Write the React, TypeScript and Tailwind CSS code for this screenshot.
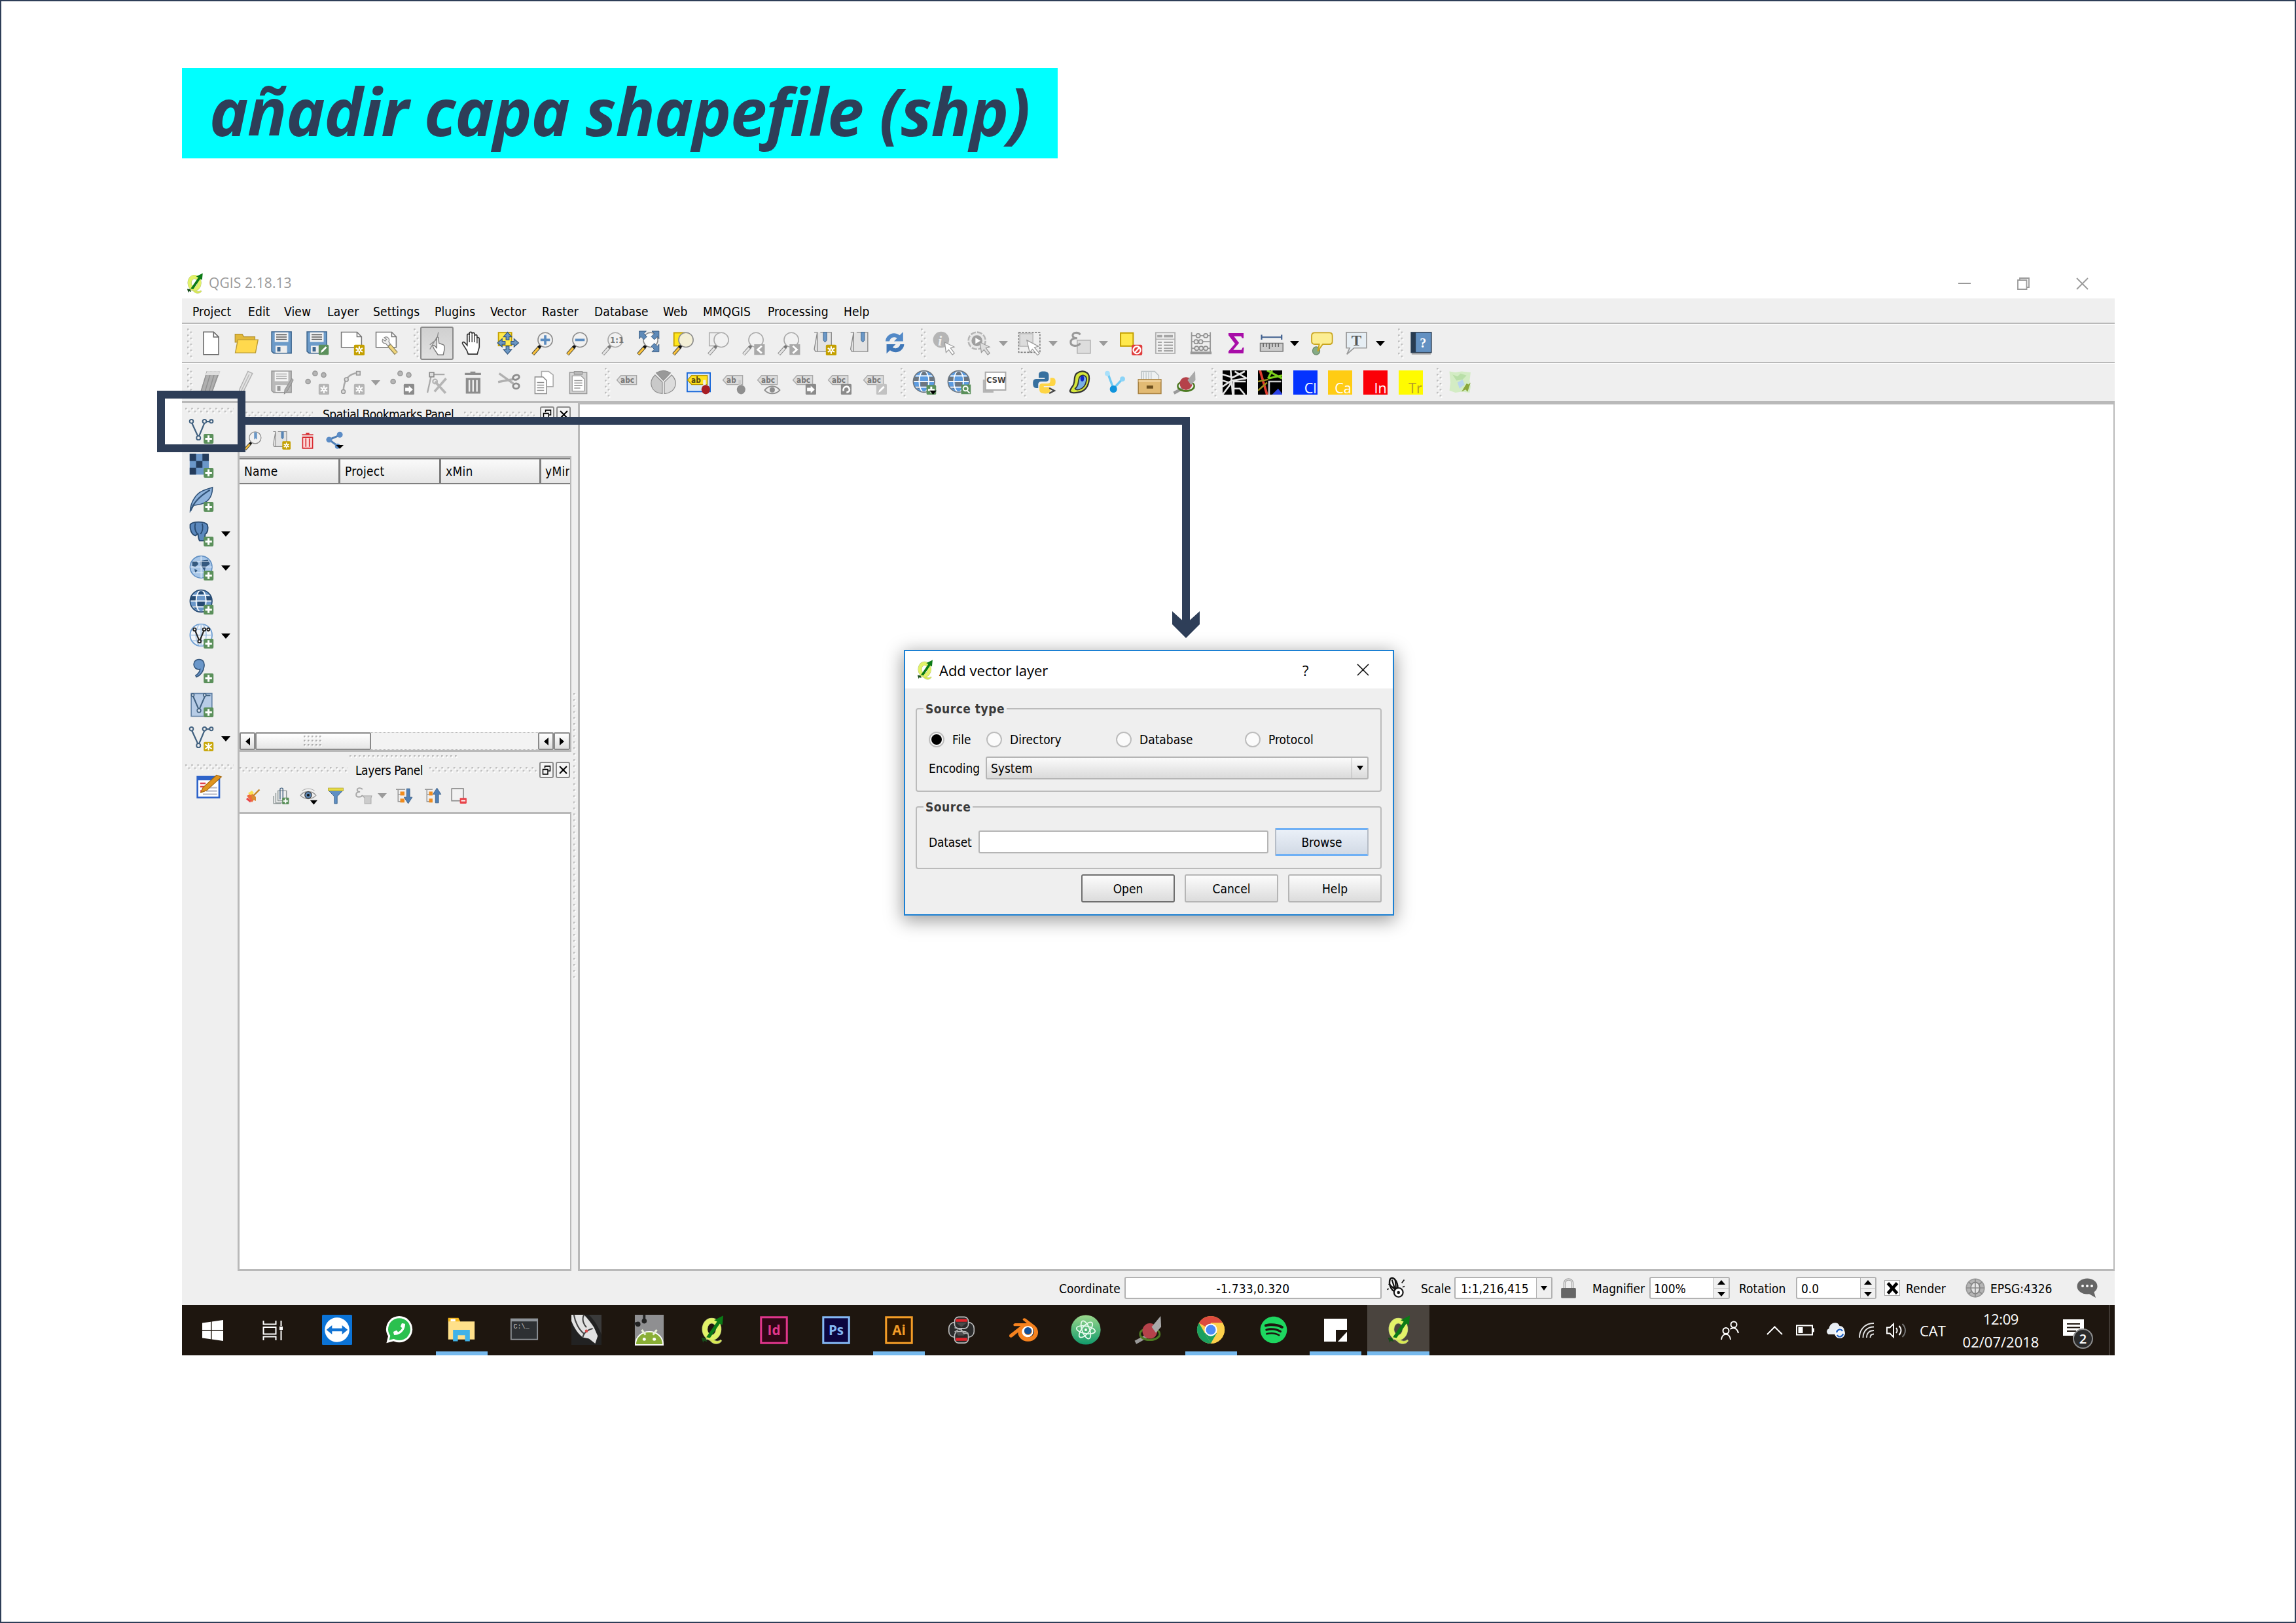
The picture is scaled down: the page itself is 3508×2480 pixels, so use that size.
import React from 'react';
import { FaPhoneAlt, FaSpotify } from 'react-icons/fa';
import { SiBlender } from 'react-icons/si';

type Kids = { children?: React.ReactNode };

/* ---------- shared icon parts ---------- */

function Ic({ children, c = 'size-[37px]' }: Kids & { c?: string }) {
  return (
    <svg viewBox="0 0 24 24" className={`${c} shrink-0 overflow-visible`} fill="none">
      {children}
    </svg>
  );
}

const Plus = () => (
  <g>
    <rect x="14" y="14.500" width="9.500" height="9.500" rx="1.200" fill="#5b905b" />
    <path d="M18.700 16v6.500M15.500 19.300h6.500" stroke="#fff" strokeWidth="1.900" />
  </g>
);
const Star = ({ f = '#c4a000' }: { f?: string }) => (
  <g>
    <rect x="13.5" y="13.5" width="10.5" height="10.5" rx="1.2" fill={f} />
    <path d="M18.75 15v7.5M15.4 16.9l6.7 3.8M22.1 16.9l-6.7 3.8" stroke="#fff" strokeWidth="1.4" />
    <circle cx="18.75" cy="18.75" r="1.2" fill={f} stroke="#fff" strokeWidth="1" />
  </g>
);
const ArrowBadge = () => (
  <g>
    <rect x="13.5" y="13.5" width="10.5" height="10.5" rx="1" fill="#8b8b8b" />
    <path d="M15 17.2h3.6v-2l4 3.7-4 3.7v-2H15z" fill="#fff" />
  </g>
);
const Mag = ({ color = false, fill = '#f1f1f1' }: { color?: boolean; fill?: string }) => (
  <g>
    <path d="M8.6 15.6 2 23" stroke={color ? '#4a4a3a' : '#8d8d8d'} strokeWidth="3.4" />
    <path d="M7.6 16.8 2.2 22.8" stroke={color ? '#fcc23c' : '#e4e4e4'} strokeWidth="2" />
    <path d="m9.8 14.2-2 2.2" stroke={color ? '#111' : '#777'} strokeWidth="2.8" />
    <circle cx="14.3" cy="8.7" r="7.2" fill={fill} stroke={color ? '#8a8a8a' : '#a8a8a8'} strokeWidth="1" />
  </g>
);
const Tag = ({ f = '#dcdcdc', s = '#a9a9a9', t = '#777', text = 'abc' }: { f?: string; s?: string; t?: string; text?: string }) => (
  <g>
    <path d="M1 9.5 5 5h15.5v9H5z" fill={f} stroke={s} strokeWidth=".9" />
    <text x="4.6" y="12.4" fontSize="7.6" fontWeight="700" fill={t} fontFamily="DejaVu Sans Condensed, sans-serif">{text}</text>
  </g>
);
const Nodes = ({ c = '#3f5f7e' }: { c?: string }) => (
  <g stroke={c} strokeWidth="1.2">
    <path d="M2.6 4 9 18 14.8 4M16.6 2.6h3.5" strokeWidth="1.4" />
    <circle cx="2.2" cy="2.4" r="1.8" fill="#efefef" />
    <circle cx="14.8" cy="2.4" r="1.8" fill="#efefef" />
    <circle cx="21.4" cy="2.4" r="1.6" fill="#efefef" />
    <circle cx="9" cy="18.4" r="1.9" fill="#efefef" />
  </g>
);
const Floppy = ({ f = '#6c9bc9', s = '#3e668e', l = '#555' }: { f?: string; s?: string; l?: string }) => (
  <g>
    <path d="M2 .6h19.500v21.2H4L2 20z" fill={f} stroke={s} strokeWidth="1" />
    <rect x="5" y="1.2" width="13.5" height="9.500" fill="#f4f4f4" />
    <path d="M6.500 3.5h10.4M6.500 5.8h10.4M6.500 8.100h10.4" stroke={l} strokeWidth="1" />
    <rect x="5.800" y="14.4" width="11.500" height="7" fill="#eee" />
    <rect x="7.500" y="15.6" width="3.200" height="4.6" fill={s} />
  </g>
);
const Globe = ({ c, land }: { c: string; land: string }) => (
  <g>
    <circle cx="11.5" cy="11" r="10.6" fill={c} />
    <path d="M2 6.500h5v4.2H1M16 6.500h5.3v4.2H16zM8 11.5h7v4.600H8zM9 1.500h5v3H9zM3 16h4v3z" fill={land} />
    <path d="M1 11h21M3 5.4h17M3 16.6h17" stroke="#fff" strokeWidth="1.100" />
    <ellipse cx="11.5" cy="11" rx="4.800" ry="10.5" stroke="#fff" strokeWidth="1.100" />
    <circle cx="11.5" cy="11" r="10.6" stroke={land} strokeWidth="1.100" />
  </g>
);
const QLogo = () => (
  <g>
    <path d="M5.500 18.800c2.600-.8 4.800-.4 6.500 1.500 1.600 1.800 4.400 2.200 6.400.3l.8 1c-1.600 3-6.200 3.400-8.700 1.200-1.500-1.500-3-2.600-5-2.600z" fill="#d9ea4e" stroke="#b9c48a" strokeWidth=".5" />
    <ellipse cx="10.500" cy="11.400" rx="6" ry="7.400" stroke="#aebb77" strokeWidth="5" />
    <ellipse cx="10.500" cy="11.400" rx="6" ry="7.400" stroke="#e2f268" strokeWidth="4.300" />
    <path d="m5.800 18.400 9.400-13.600-2.600-1.200L20.600-.4l-.8 8.200-2.200-1.200L9 19.200z" fill="#0b7a16" />
    <path d="m1.500 18.800 3.800.4 1.200 3.200-2.600-.9-.9 1.800z" fill="#174d1b" />
  </g>
);

/* ---------- chrome helpers ---------- */

const VDots = ({ c = 'h-[46px] w-[9px]' }: { c?: string }) => (
  <svg className={c}><rect width="100%" height="100%" fill="url(#zig)" /></svg>
);
const HDots = ({ c = '' }: { c?: string }) => (
  <svg className={`h-[9px] ${c}`}><rect width="100%" height="100%" fill="url(#zig)" /></svg>
);
const B = ({ children }: Kids) => <div className="flex w-[53.8px] shrink-0 items-center justify-center">{children}</div>;
const Handle = () => <div className="flex w-[22px] shrink-0 items-center justify-end"><VDots /></div>;
const Drop = ({ g = false }: { g?: boolean }) => (
  <div className="flex w-[23px] shrink-0 items-center pl-[2px]">
    <svg viewBox="0 0 14 8" className="h-[8px] w-[14px]"><path d="M0 0h14L7 8z" fill={g ? '#9b9b9b' : '#000'} /></svg>
  </div>
);

const menus: [string, string][] = [
  ['Project', 'w-[85px]'], ['Edit', 'w-[55px]'], ['View', 'w-[66px]'], ['Layer', 'w-[70px]'], ['Settings', 'w-[94px]'],
  ['Plugins', 'w-[85px]'], ['Vector', 'w-[79px]'], ['Raster', 'w-[80px]'], ['Database', 'w-[105px]'], ['Web', 'w-[61px]'],
  ['MMQGIS', 'w-[99px]'], ['Processing', 'w-[116px]'], ['Help', 'w-[60px]'],
];

function ToolbarOne() {
  return (
    <div className="flex h-[60px] items-stretch border-t-[1px] border-b-[2px] border-t-white border-b-[#b9b9b9]">
      <div className="flex w-[18px] items-center justify-end pr-[1px]"><VDots /></div>
      <B><Ic><path d="M4.500.8h10l5 5v17.400h-15z" fill="#fff" stroke="#666" strokeWidth="1" /><path d="M14.500.8v5h5" stroke="#666" /></Ic></B>
      <B><Ic><path d="M.8 3h7l1.6 2.6h11V11H.8z" fill="#e2b93a" stroke="#b5922c" strokeWidth=".8" /><path d="M3.5 8.500h20L21 21.500H1z" fill="#ffd94d" stroke="#b99a34" strokeWidth=".9" /></Ic></B>
      <B><Ic><Floppy /></Ic></B>
      <B><Ic><Floppy /><rect x="13.5" y="13.5" width="10" height="10" rx="1.2" fill="#5b905b" /><path d="m15.5 21.5 1-2.5 4-4 1.2 1.4-4 4z" fill="#fff" /></Ic></B>
      <B><Ic><path d="M1 1h15.500l4.500 4.500V16H1z" fill="#fff" stroke="#777" /><path d="M16.500 1v4.500H21" stroke="#777" /><Star /></Ic></B>
      <B><Ic><path d="M1 1h15.500l4.500 4.500V16H1z" fill="#fff" stroke="#777" /><path d="M16.500 1v4.500H21" stroke="#777" /><path d="m14 14 7 8.2" stroke="#8d8358" strokeWidth="4.2" /><path d="m14.5 14.5 6.3 7.2" stroke="#f0d57c" strokeWidth="2.6" /><path d="M9 6.500c3-2 6 .8 4.6 4l1.6 2.400-2.600 1.800-2-2.400c-3 .2-4-2.300-3-4.300l2.400 1.800 1.400-1.600z" fill="#eee" stroke="#888" strokeWidth=".8" /></Ic></B>
      <Handle />
      <B>
        <div className="flex h-[51px] w-[51px] items-center justify-center rounded-[3px] border-2 border-[#8b8b8b] bg-linear-to-b from-[#d0d0d0] to-[#e0e0e0]">
          <Ic><path d="M13.500 1 12 8 5 13.500M12 6 5 18" stroke="#8d8d8d" strokeWidth=".9" /><path d="M12 6.500c.4-.8 1.400-.8 1.500 0l.6 5.500 4 1.400c1.800.8 1.800 2.400 1.400 4.600l-1.200 5.500h-5.200L9.400 18l-1.600-3.400c.8-.8 1.600-.4 2 0l2.100 2z" fill="#fff" stroke="#777" strokeWidth=".9" /></Ic>
        </div>
      </B>
      <B><Ic><path d="M8 22.800 6.600 19 2.400 12.400c-.5-1.600 1-2.200 2.200-1L7 14V4c0-1.600 2.200-1.600 2.200 0V2.400C9.200.4 11.800.4 11.800 2.400v.4c0-1.800 2.600-1.600 2.600.2v1.600c.2-1.400 2.400-1.400 2.400.4v2c.4-1.200 2.200-1 2.200.6v8.200L17 22.800z" fill="#fff" stroke="#333" strokeWidth="1.100" /><path d="M9.200 4v7M11.800 3v8M14.400 4v7M16.800 6v6" stroke="#333" strokeWidth=".9" /></Ic></B>
      <B><Ic><rect x="3" y="1.400" width="13" height="13" fill="#ffe94d" stroke="#c4a000" strokeWidth="1.200" /><path d="m12 1 4 4.600h-2.500v3h-3v-3H8zM12 22.800l-4-4.600h2.500v-3.400h3v3.400H16zM2 11.600l4.600-4v2.500h3v3h-3v2.500zM23 11.600l-4.600-4v2.500h-3v3h3v2.500z" fill="#6b97c4" stroke="#34577e" strokeWidth=".8" /></Ic></B>
      <B><Ic><Mag color /><path d="M14.300 4v9.400M9.600 8.700H19" stroke="#5b8cc0" strokeWidth="2.400" /></Ic></B>
      <B><Ic><Mag color /><path d="M9.600 8.700H19" stroke="#5b8cc0" strokeWidth="2.400" /></Ic></B>
      <B><Ic><Mag /><text x="9.100" y="11.800" fontSize="8.500" fontWeight="700" fill="#777" fontFamily="DejaVu Sans Condensed, sans-serif">1:1</text></Ic></B>
      <B><Ic><Mag color fill="#fafafa" /><path d="M3 0h7L7.600 2.400l3 3-3 3-3-3L3 7.600zM22.600 0h-7L18 2.400l-3 3 3 3 3-3 1.600 2.200zM22.600 20.500h-7L18 18l-3-3 3-3 3 3 1.600-2z" fill="#5f8ab8" stroke="#34577e" strokeWidth=".6" /></Ic></B>
      <B><Ic><rect x="2.400" y="1.600" width="10" height="13" fill="#ffe61c" stroke="#c4a000" strokeWidth="1.200" /><Mag color fill="#f3efd6" /></Ic></B>
      <B><Ic><rect x="2.400" y="1.600" width="10" height="13" fill="#eee" stroke="#aaa" /><Mag /></Ic></B>
      <B><Ic><Mag /><rect x="12.500" y="13" width="10.500" height="10.500" fill="#a9a9a9" /><path d="m20 14.800-4 3.500 4 3.500" stroke="#fff" strokeWidth="1.800" /></Ic></B>
      <B><Ic><Mag /><rect x="12.500" y="13" width="10.500" height="10.500" fill="#a9a9a9" /><path d="m15.800 14.800 4 3.500-4 3.500" stroke="#fff" strokeWidth="1.800" /></Ic></B>
      <B><Ic><path d="M2 1.200h3v19h14V1.200H8M5 1.200v19H3.200L2 18z" fill="#e3e3e3" stroke="#8b8b8b" strokeWidth=".9" /><path d="M11 1h3.400v8l-1.700 2-1.700-2z" fill="#6a97c6" stroke="#3e668e" strokeWidth=".6" /><Star /></Ic></B>
      <B><Ic><path d="M3 1.200h3v19h14V1.200H9M6 1.200v19H4.200L3 18z" fill="#e3e3e3" stroke="#8b8b8b" strokeWidth=".9" /><path d="M13.400 1h3.400v8l-1.700 2-1.700-2z" fill="#6a97c6" stroke="#3e668e" strokeWidth=".6" /></Ic></B>
      <B><Ic><path d="M2.600 10C2.800 4 10-.8 16.600 4L20 .8V10h-9l3-3C10.600 5 7.600 6.200 6.400 10z" fill="#5289c7" /><path d="M21 13c-.2 6-7.400 10.800-14 6l-3.400 3.200V13h9l-3 3c3.400 2 6.400.8 7.600-3z" fill="#3f77b8" /></Ic></B>
      <Handle />
      <B><Ic><circle cx="9" cy="8.500" r="8" fill="#b5b5b5" /><text x="6" y="14" fontSize="14" fontWeight="700" fontStyle="italic" fill="#eee" fontFamily="Liberation Serif, serif">i</text><path d="m12.500 11 9.500 4.600-3.600 1.200 3.800 5-2 1.600-3.700-5-2.600 2.800z" fill="#fff" stroke="#999" strokeWidth=".8" /></Ic></B>
      <B><Ic><circle cx="9.500" cy="9.500" r="7.400" stroke="#b5b5b5" strokeWidth="3.800" strokeDasharray="4.600 1.200" /><circle cx="9.500" cy="9.500" r="7.600" fill="#e8e8e8" /><circle cx="9.500" cy="9.500" r="5.400" fill="#a0a0a0" /><path d="m8 6.500 5 3-5 3z" fill="#fff" /><path d="m12.500 11 9.500 4.600-3.600 1.200 3.800 5-2 1.600-3.700-5-2.600 2.800z" fill="#ddd" stroke="#999" strokeWidth=".8" /></Ic></B>
      <Drop g />
      <B><Ic><path d="M1 1.500h21v19.500H1z" stroke="#777" strokeDasharray="2 1.200" /><rect x="2" y="2.500" width="13" height="12.500" fill="#dcdcdc" stroke="#bbb" /><path d="m9 9 11.500 6-4 1.200 5 6-2 1.600-4.900-6-2.800 3.200z" fill="#fff" stroke="#999" strokeWidth=".8" /></Ic></B>
      <Drop g />
      <B><Ic><rect x="9" y="9" width="13" height="13" fill="#ddd" stroke="#b2b2b2" /><path d="M12 3.500C10 .5 4 1 4.500 4.500 4.800 6.500 6.500 7 9 7c-3.500 0-6.500 1-6.500 4C2.500 15.500 10 15.500 12 12" stroke="#999" strokeWidth="2" /></Ic></B>
      <Drop g />
      <B><Ic><rect x="2" y="1.800" width="12.500" height="13" fill="#ffe94d" stroke="#c4a000" strokeWidth="1.300" /><rect x="13" y="13.500" width="10.500" height="10.500" rx="1.500" fill="#e03c3c" /><circle cx="18.200" cy="18.700" r="3.600" stroke="#fff" strokeWidth="1.500" /><path d="m16 21.400 4.600-5.200" stroke="#fff" strokeWidth="1.500" /></Ic></B>
      <B><Ic><rect x="2.500" y="1.500" width="19" height="20.500" fill="#f2f2f2" stroke="#b0b0b0" strokeWidth="1.200" /><path d="M4 5h5M10.500 5h9" stroke="#a5a5a5" strokeWidth="2.400" /><path d="M2 8h20" stroke="#b0b0b0" /><path d="M4.500 11h4M10.500 11h9M4.500 14h4M10.500 14h9M4.500 17h4M10.500 17h9M4.500 19.500h4M10.500 19.500h9" stroke="#a5a5a5" strokeWidth="1.400" /></Ic></B>
      <B><Ic><path d="M3 1v21M21.500 1v21M3 4.500h18.500M3 10.500h18.500M3 17h18.500" stroke="#999" strokeWidth="1.200" /><path d="M1.800 21.600h21" stroke="#999" strokeWidth="2.600" /><g fill="#e5e5e5" stroke="#8f8f8f" strokeWidth="1.100"><circle cx="9.500" cy="4.500" r="2" /><circle cx="17" cy="4.500" r="2" /><circle cx="7.500" cy="10.500" r="2" /><circle cx="12" cy="10.500" r="2" /><circle cx="8" cy="17" r="2" /><circle cx="12.500" cy="17" r="2" /><circle cx="17" cy="17" r="2" /></g></Ic></B>
      <B><Ic><path d="M4.500 2h15v5h-1.500l-.9-1.800H10l5 6.400-5.800 7h8.200l1.200-2.400h1.200l-.5 5.800H4.500v-2L11 12.500 4.500 4z" fill="#a80da8" /></Ic></B>
      <B><Ic><path d="M2 6h20.500M2.300 3.600v4.800M22.200 3.600v4.800" stroke="#3f5f8e" strokeWidth="1.400" /><rect x="1" y="12" width="22.500" height="8" fill="#ccc" stroke="#777" /><path d="M4 12v3.500M7 12v3.500M10 12v5.500M13 12v3.500M16 12v3.500M19 12v3.500" stroke="#666" /></Ic></B>
      <Drop />
      <B><Ic><ellipse cx="6.500" cy="19.500" rx="3.600" ry="4" fill="#85ab85" stroke="#6b876b" strokeWidth=".8" /><path d="M5 1.500h14.500c2 0 3 1 3 3v5.500c0 2-1 3-3 3H13l-5 7 1.500-7H5c-2 0-3-1-3-3V4.500c0-2 1-3 3-3z" fill="#fcee93" stroke="#c9a51f" strokeWidth="1.200" /></Ic></B>
      <B><Ic><path d="M2 1.200h20v15.500H9.500L2.500 23l2.800-6.300H2z" fill="#e6eef4" stroke="#9a9a9a" strokeWidth="1.100" /><text x="6.900" y="14.200" fontSize="15" fontWeight="700" fill="#555" fontFamily="Liberation Serif, serif">T</text></Ic></B>
      <Drop />
      <Handle />
      <B><Ic><path d="M2.500 22.400h19" stroke="#aaa" strokeWidth="1.600" /><rect x="2" y="1.200" width="20" height="20" fill="#6391c2" stroke="#34475c" /><rect x="2" y="1.200" width="4.600" height="20" fill="#283c52" /><text x="10.500" y="16" fontSize="13" fontWeight="700" fill="#fff" fontFamily="Liberation Serif, serif">?</text></Ic></B>
    </div>
  );
}

const Pts = () => (
  <g fill="#b5b5b5" stroke="#999"><circle cx="10" cy="3" r="2.300" /><circle cx="18.500" cy="4.500" r="2.300" /><circle cx="3" cy="11" r="2.300" /></g>
);
const Pencil = () => (
  <g>
    <path d="M13.500 1 18 3 9 21l-4 2.500.3-5z" fill="#e4e4e4" stroke="#b4b4b4" />
    <path d="M14.800 4 7 20" stroke="#bbb" />
  </g>
);
const Letters = ({ f, t, c = '#fff' }: { f: string; t: string; c?: string }) => (
  <Ic><rect x="0" y="0" width="24" height="24" fill={f} /><text x="23.200" y="22.800" textAnchor="end" fontSize="14" fill={c} fontFamily="Open Sans, sans-serif">{t}</text></Ic>
);
const Bug = () => (
  <g>
    <path d="m1 22.500 9-5" stroke="#999" strokeWidth="3" />
    <ellipse cx="13" cy="15.500" rx="8.200" ry="5" stroke="#4c7a22" strokeWidth="1.600" />
    <ellipse cx="13" cy="13" rx="6.200" ry="6.400" fill="#b5424a" />
    <path d="M14.500 9.500 22 .5l.4 9-4.400 5z" fill="#a9a9a9" />
    <path d="M5 17c3.500 4.500 12.500 4.500 16 0" stroke="#4c7a22" strokeWidth="1.600" />
  </g>
);

function ToolbarTwo() {
  return (
    <div className="flex h-[61px] items-stretch border-t-[1px] border-b-[3px] border-t-white border-b-[#b9b9b9]">
      <div className="flex w-[18px] items-center justify-end pr-[1px]"><VDots /></div>
      <B><Ic><g opacity=".9"><path d="M8 1h13l-8 21H1z" fill="#a9a9a9" /><path d="m8 1-6 20M12 1 6 21M16 1l-6 20M20 1l-7 20" stroke="#8a8a8a" /><path d="M8 1h13l-1.500 3.500h-13z" fill="#ddd" /></g></Ic></B>
      <B><Ic><Pencil /></Ic></B>
      <B><Ic><Floppy f="#b9b9b9" s="#999" l="#aaa" /><path d="m22 8 1.500 1.500-6 11-3 3 .5-4.500z" fill="#aaa" stroke="#888" strokeWidth=".6" /></Ic></B>
      <B><Ic><Pts /><Star f="#b5b5b5" /></Ic></B>
      <B><Ic><path d="M3 22C3 10 8 3 18 2.500" stroke="#a9a9a9" strokeWidth="1.600" /><g fill="#ddd" stroke="#999"><rect x="16" y="1" width="3.600" height="3.600" /><circle cx="6" cy="9" r="1.900" /><circle cx="3" cy="21" r="1.900" /></g><Star f="#b5b5b5" /></Ic></B>
      <Drop g />
      <B><Ic><Pts /><ArrowBadge /></Ic></B>
      <B><Ic><path d="M6 4h13M6 4 2 22" stroke="#aaa" strokeWidth="1.500" /><rect x="4" y="2" width="4.400" height="4.400" fill="#ddd" stroke="#888" /><path d="M20.500 8 9 21M9.500 11 20 22.500" stroke="#b5b5b5" strokeWidth="2.400" /><circle cx="9.500" cy="11" r="2.200" stroke="#b5b5b5" strokeWidth="1.400" /></Ic></B>
      <B><Ic><path d="M4 3.500h16M9.500 2.200h5" stroke="#8d8d8d" strokeWidth="2.200" /><path d="M5 7.500h14.500V23H5z" fill="#8d8d8d" /><path d="M8.500 9.500V21M12.200 9.500V21M16 9.500V21" stroke="#eee" strokeWidth="1.600" /></Ic></B>
      <B><Ic><path d="m3 3 14 10M2 11.500l16-3" stroke="#b0b0b0" strokeWidth="2.200" /><g stroke="#8d8d8d" strokeWidth="1.900"><ellipse cx="19.800" cy="6.800" rx="3.200" ry="2.200" transform="rotate(-20 20 7)" /><ellipse cx="19.800" cy="15.500" rx="3" ry="2.600" /></g></Ic></B>
      <B><Ic><g fill="#fff" stroke="#aaa"><path d="M10 1h7l4.500 3.500V16H10z" /><path d="M3.500 6.500h8L15 10v13H3.500z" stroke="#8d8d8d" /></g><path d="M5.500 12h7M5.500 14.600h7M5.500 17.200h7M5.500 19.800h7" stroke="#8d8d8d" /></Ic></B>
      <B><Ic><rect x="3.500" y="2" width="17" height="21" fill="#d5d5d5" stroke="#999" /><path d="M6 5.500h9l3 3V20.500H6z" fill="#fff" stroke="#999" strokeWidth=".8" /><path d="M8 1h8v3H8z" fill="#bbb" stroke="#999" strokeWidth=".8" /><path d="M8 10h8M8 12.500h8M8 15h8M8 17.500h6" stroke="#999" /></Ic></B>
      <Handle />
      <B><Ic><Tag /></Ic></B>
      <B><Ic><g stroke="#8f8f8f" strokeWidth=".8"><path d="M5 2.500Q12-2 19 2.500L12 10z" fill="#999" /><path d="M3.800 4.500 11 11.500V23C-1 22-3 11 3.800 4.500z" fill="#c9c9c9" /><path d="M20.200 4.500 13 11.500V23C25 22 27 11 20.200 4.500z" fill="#dcdcdc" /></g></Ic></B>
      <B><Ic><rect x=".6" y="2.500" width="22.800" height="18.500" fill="#d9e8f7" stroke="#1464d8" strokeWidth="1.200" /><Tag f="#ffe21f" s="#b59500" t="#554a10" text="ab" /><path d="M17.700 9.500v5" stroke="#eee" strokeWidth="2.600" /><ellipse cx="19" cy="19" rx="4.200" ry="4.600" fill="#a81e24" /></Ic></B>
      <B><Ic><Tag text="ab" /><path d="M17.700 9.500v5" stroke="#ccc" strokeWidth="2.600" /><ellipse cx="19" cy="19" rx="4.200" ry="4.600" fill="#8f8f8f" /></Ic></B>
      <B><Ic><Tag /><path d="M8 19.500c4-5 11-5 15 0-4 4.600-11 4.600-15 0z" fill="#eee" stroke="#8d8d8d" strokeWidth="1.200" /><circle cx="15.500" cy="19.300" r="2.600" fill="#8d8d8d" /></Ic></B>
      <B><Ic><Tag /><ArrowBadge /></Ic></B>
      <B><Ic><Tag /><rect x="13.500" y="13.500" width="10.500" height="10.500" rx="1" fill="#8b8b8b" /><path d="M16 20.500c-1-5 5.500-6.400 6-1.500-.2 2-1.400 2.800-3 2.600" stroke="#fff" strokeWidth="1.700" /></Ic></B>
      <B><Ic><Tag /><rect x="13.500" y="13.500" width="10.500" height="10.500" rx="1" fill="#c2c2c2" /><path d="m15.500 22 1-2.600 4-4 1.300 1.400-4.300 4.200z" fill="#fff" /></Ic></B>
      <Handle />
      <B><Ic><Globe c="#5b9be0" land="#6c7680" /><Plus /><path d="M17 20h7l-3.500 4z" fill="#000" /></Ic></B>
      <B><Ic><Globe c="#5b9be0" land="#6c7680" /><rect x="14" y="14" width="9.500" height="9.500" fill="#5b905b" /><circle cx="18.300" cy="18" r="2.300" stroke="#fff" strokeWidth="1.300" /><path d="m20 20 2.400 2.600" stroke="#fff" strokeWidth="1.300" /></Ic></B>
      <B><Ic><path d="M1.500 9v12H11" stroke="#b5b5b5" strokeWidth="2" /><rect x="3" y="1.800" width="20" height="17.600" fill="#fff" stroke="#aaa" strokeWidth="1.300" /><text x="4" y="12.500" fontSize="8.200" fontWeight="700" fill="#444" fontFamily="DejaVu Sans Condensed, sans-serif">CSW</text></Ic></B>
      <Handle />
      <B><Ic><path d="M11 1c-4 0-4.500 1.500-4.500 4v2.500h6v1H4C1 8.500.8 11 .8 13c0 3 1.200 4.500 3.200 4.500h2V14c0-2 1.200-3 3-3h5c1.600 0 2.500-1 2.500-2.500V5c0-3-2-4-5.500-4z" fill="#37709f" /><path d="M13 23c4 0 5-1.500 5-4v-2.500h-6.500v-1H20c2.600 0 3.200-2 3.200-4.500 0-3-1.400-3.600-3.200-3.600h-2V10c0 2-1 3-3 3h-5c-1.600 0-2.800 1-2.800 2.800V19c0 3 2 4 5.800 4z" fill="#fed545" /><path d="m17 17.500 5 2.600-5 2.600" stroke="#444" strokeWidth="1.500" /></Ic></B>
      <B><Ic><path d="M4 17C9 12 5 7 9 3c5-4 13-2 12.500 5S18 20 12 21.500C6 23 2 22 2.500 20z" fill="#d5e63c" stroke="#333" strokeWidth="1.400" /><path d="M7.500 18c5-3.500 2-9 5-12 3-2.500 7-.5 6.300 3.800C18 15 15 18 11.500 19c-2 .5-3.500.3-4-1z" fill="#79b1e6" stroke="#333" strokeWidth="1.100" /><ellipse cx="14.600" cy="8" rx="1.800" ry="3" fill="#1429c4" /></Ic></B>
      <B><Ic><path d="m5 3 5.500 15L19 9" stroke="#6fcaf4" strokeWidth="2.200" /><circle cx="4.500" cy="3" r="2.500" fill="#a9e0fa" /><circle cx="19.500" cy="8.500" r="2.500" fill="#8bd4f8" /><circle cx="10.500" cy="18.500" r="3.600" fill="#0e93dc" /></Ic></B>
      <B><Ic><path d="M4 1h13l4 4v6H4z" fill="#eef1f2" stroke="#b9c0c2" /><path d="M6 2v7M8.500 2v7M11 2v7M13.500 2v7" stroke="#c5cccf" /><rect x=".8" y="9" width="22.500" height="14" fill="#e2ba73" stroke="#a88243" /><path d="M1 10.500h22" stroke="#f0d29b" strokeWidth="2" /><rect x="9" y="15" width="6.500" height="3" fill="#6d4f1e" /></Ic></B>
      <B><Ic><Bug /></Ic></B>
      <Handle />
      <B><svg viewBox="0 0 24 24" className="size-[37px]" fill="none"><rect width="24" height="24" fill="#000" /><path d="m0 4 10 3L22 1M8 0l2 24M12 1l12 7M0 16l9-6 14-2M0 24l9-12M11 24V11h12M0 10l9 3M11 18h6l5 6" stroke="#e8e8e8" strokeWidth="1.700" /></svg></B>
      <B><svg viewBox="0 0 24 24" className="size-[37px]" fill="none"><rect width="24" height="24" fill="#000" /><path d="M10 8 24 5M9 0l15 8M10 8l4-8" stroke="#7dcf1c" strokeWidth="2" /><path d="m2 0 7 24" stroke="#e13a2b" strokeWidth="2.400" /><path d="M11 24V11h12" stroke="#ccc" strokeWidth="1.700" /><path d="m0 20 9-8M0 11l10-2" stroke="#9c8f1e" strokeWidth="1.600" /><path d="m14 24 6-6 4 5v1z" fill="#2c43e6" /></svg></B>
      <B><Letters f="#0433ff" t="Cl" /></B>
      <B><Letters f="#ffcc14" t="Ca" /></B>
      <B><Letters f="#fb0007" t="In" /></B>
      <B><Letters f="#fffb00" t="Tr" c="#b59a2c" /></B>
      <Handle />
      <B><Ic><path d="m1 1 6 1 6-1 9 1-1 8 1 6-1 6-8-1-6 1-6-2 1-8z" fill="#d3ecc4" /><path d="m4 4 5 2 3-3 6 2-4 4-6 1z" fill="#b9dfa8" /><path d="m9 12 5-3 2 5-5 4z" fill="#b9d5ef" /><path d="m13 21 5-8 2 1 2-2-3 9-2-2z" fill="#8aa83c" /></Ic></B>
    </div>
  );
}

function LeftBar() {
  const icons: [React.ReactNode, boolean][] = [
    [<><Nodes /><Plus /></>, false],
    [<><rect x=".5" y="1" width="18.500" height="20" fill="#6b97c9" /><path d="M.5 1h6.200v6.700H.5zM12.800 1H19v6.700h-6.200zM6.700 7.700h6.100v6.600H6.700zM.5 14.300h6.200V21H.5z" fill="#243c5c" /><Plus /></>, false],
    [<><path d="M1 23.500C1 18 4 10 10 5.500 14 2.500 18 2 22.500.5c0 6-2 12-8 15-4 2-7 1.800-10 2.200z" fill="#8fb3dc" stroke="#33557b" /><path d="M1.500 23C4 15 10 9 20 3" stroke="#33557b" strokeWidth="1.400" /><Plus /></>, false],
    [<><path d="M1 3c2-3.500 14-3.500 16.500 0 1.500 4 0 8-2 9-.5 2.500 0 5-1.500 6.500h-4C8.500 16 9 13.500 8.500 12L6 13.500C2 12.500.5 7 1 3z" fill="#5b88bd" stroke="#284a70" strokeWidth="1.200" /><path d="M6 1.500c-1 4 0 8 2 10.500M12.500 2c1.500 4 0 8-1.500 10" stroke="#284a70" strokeWidth="1.200" /><Plus /></>, true],
    [<><circle cx="11.500" cy="11" r="10.600" fill="#a7c6e8" stroke="#5f8ec2" /><path d="m3 6 4-1 2 3-3 3-3-1zM11 5l7-1 2 4-4 3-1 4-2-3-2-3zM5 13l3 1-2 3zM15 16l3-1-1 3z" fill="#34597f" /><path d="M1 11h21M4 5.500h15M4 16.500h15M11.500.5v21" stroke="#e5effa" strokeWidth=".7" /><Plus /></>, true],
    [<><Globe c="#6b97c9" land="#264a72" /><Plus /></>, false],
    [<><circle cx="11.500" cy="11" r="10.600" fill="#f3f6f9" stroke="#6f9fd3" strokeWidth="1.200" /><path d="M1 11h21M3 5.400h17M3 16.600h17M11.500.5v21" stroke="#a5c3e4" /><ellipse cx="11.500" cy="11" rx="5" ry="10.500" stroke="#a5c3e4" /><path d="m5.500 6 4.500 11L14.500 6" stroke="#222" strokeWidth="1.300" /><g fill="#fff" stroke="#222" strokeWidth="1.200"><circle cx="5.300" cy="5.600" r="1.400" /><circle cx="14.500" cy="5.600" r="1.400" /><circle cx="18.500" cy="5.600" r="1.300" /><circle cx="10" cy="17" r="1.500" /></g><Plus /></>, true],
    [<><path d="M4.500 5.500c0-3 2.500-4.500 5-4.500 3.500 0 5.500 2.500 5 6.500-.5 5-3.500 9-7.500 10.500l-.8-1.500c2.500-1.500 4-3.500 4.300-6-3.500.8-6-1.500-6-5z" fill="#6b97c9" stroke="#33557b" /><Plus /></>, false],
    [<><path d="M2 1h20v22H2z" fill="#b7cce6" stroke="#5f7fa3" /><path d="m3.500 3 6 14 6-14h5" stroke="#3f5f7e" strokeWidth="1.300" /><g fill="#dbe6f3" stroke="#3f5f7e"><circle cx="3.500" cy="2.600" r="1.300" /><circle cx="15" cy="2.600" r="1.300" /><circle cx="9.500" cy="17.500" r="1.800" /></g><Plus /></>, false],
    [<><Nodes /><rect x="14" y="15" width="9.500" height="9" rx="1.200" fill="#c9a80c" /><path d="M18.700 16v7M15.500 17.300l6.400 4.400M21.900 17.300l-6.400 4.400" stroke="#fff" strokeWidth="1.200" /></>, true],
  ];
  return (
    <div className="flex w-[85px] shrink-0 flex-col bg-[#efefef] pt-[7px]">
      <HDots c="ml-[5px] w-[74px]" />
      {icons.map(([ic, drop], i) => (
        <div key={i} className="flex h-[52.3px] items-center pt-[1px] pl-[11px]">
          <Ic c="size-[38px]">{ic}</Ic>
          {drop && <svg viewBox="0 0 14 8" className="ml-[11px] h-[8px] w-[14px]"><path d="M0 0h14L7 8z" /></svg>}
        </div>
      ))}
      <HDots c="mt-[13px] ml-[5px] w-[74px]" />
      <Ic c="mt-[5px] ml-[22px] size-[40px]">
        <rect x="1" y="3" width="20" height="19" fill="#fff" stroke="#2e63c9" strokeWidth="1.600" />
        <path d="M1 4.500h20" stroke="#2e63c9" strokeWidth="3.200" />
        <path d="M3.500 9h5M3.500 12h4M3.500 16h4" stroke="#e0404a" strokeWidth="1.400" />
        <path d="M9 13h10M9 16h10M6 19h13" stroke="#b9bcc9" strokeWidth="1.300" />
        <path d="m4 17.500 2-4.500L18.500 1.500 23 3 9.500 15.500z" fill="#df951f" stroke="#a8690e" strokeWidth=".7" />
      </Ic>
    </div>
  );
}

const PanelBtns = () => (
  <div className="flex gap-[3px]">
    <div className="flex h-[25px] w-[22px] items-center justify-center rounded-[3px] border-2 border-[#8a8a8a] bg-[#f4f4f4]">
      <svg viewBox="0 0 14 16" className="h-[16px] w-[14px]" fill="none" stroke="#000"><path d="M4.500 5V1.500h8V9H10M4 2h9" strokeWidth="1.500" /><path d="M1.500 6.500h7.500V14H1.500zM1 7h8" strokeWidth="1.500" /></svg>
    </div>
    <div className="flex h-[25px] w-[22px] items-center justify-center rounded-[3px] border-2 border-[#8a8a8a] bg-[#f4f4f4]">
      <svg viewBox="0 0 12 12" className="h-[13px] w-[13px]"><path d="m1 1 10 10M11 1 1 11" stroke="#000" strokeWidth="1.900" /></svg>
    </div>
  </div>
);

const P = ({ children, w }: Kids & { w: string }) => <div className={`flex items-center justify-center ${w}`}>{children}</div>;
const SbBtn = ({ d, c }: { d: string; c: string }) => (
  <div className={`flex items-center justify-center rounded-[2px] border-2 border-[#8a8a8a] bg-linear-to-b from-white to-[#dedede] ${c}`}>
    <svg viewBox="0 0 8 12" className="h-[12px] w-[8px]"><path d={d} /></svg>
  </div>
);

function Panels() {
  return (
    <div className="flex w-[520px] shrink-0 flex-col border-l-[3px] border-[#b9b9b9] bg-[#efefef]">
      <div className="w-[506px]">
        <div className="flex h-[32px] items-center pt-[2px]">
          <HDots c="w-[112px]" />
          <span className="ml-[15px] w-[204px] text-[19px] tracking-[-0.48px]">Spatial Bookmarks Panel</span>
          <HDots c="ml-[12px] w-[108px]" />
          <div className="ml-auto"><PanelBtns /></div>
        </div>
        <div className="flex h-[49px] items-center">
          <P w="w-[42px]"><Ic c="size-[30px]"><Mag color /><path d="M13 2h3.600v9l-1.800-1.600L13 11z" fill="#6a97c6" /></Ic></P>
          <P w="w-[42px]"><Ic c="size-[29px]"><path d="M2 1.200h3v19h14V1.200H8M5 1.200v19H3.200L2 18z" fill="#e3e3e3" stroke="#8b8b8b" strokeWidth=".9" /><path d="M12 1h3.400v8l-1.700 2-1.700-2z" fill="#5985b5" /><Star /></Ic></P>
          <P w="w-[40px]"><Ic c="size-[26px]"><path d="M4 4h16M9.500 2.200h5" stroke="#d8262c" strokeWidth="1.500" /><path d="M5 7.500h14V23H5z" fill="#fbdada" stroke="#d8262c" strokeWidth="1.500" /><path d="M9.500 9v12M14.500 9v12" stroke="#d8262c" strokeWidth="1.500" /></Ic></P>
          <P w="w-[42px]"><Ic c="size-[28px]"><path d="M19 5 5 11l11 8" stroke="#4f7fb5" strokeWidth="2.600" /><circle cx="19" cy="4.500" r="3.800" fill="#5b8cc6" /><circle cx="5" cy="11" r="3.800" fill="#5b8cc6" /><circle cx="16" cy="19.500" r="3.400" fill="#5b8cc6" /><path d="M14 18h10L19 23z" fill="#000" /></Ic></P>
        </div>
      </div>
      <div className="flex h-[452px] w-[507px] flex-col border-t-[3px] border-r-2 border-b-[3px] border-[#b9b9b9] bg-white">
        <div className="flex h-[40px] overflow-hidden border-t-2 border-b-2 border-[#808080] bg-linear-to-b from-[#fafafa] to-[#e6e6e6] text-[19px] leading-[37px] tracking-[0.3px]">
          <div className="w-[154px] shrink-0 border-r-[3px] border-[#7d7d7d] pl-[7px]">Name</div>
          <div className="w-[154px] shrink-0 border-r-[3px] border-[#7d7d7d] pl-[7px]">Project</div>
          <div className="w-[153px] shrink-0 border-r-[3px] border-[#7d7d7d] pl-[7px]">xMin</div>
          <div className="w-[43px] shrink-0 overflow-hidden pl-[6px]">yMin</div>
        </div>
        <div className="flex-1" />
        <div className="flex h-[27px]">
          <SbBtn c="w-[24px]" d="M8 0v12L1 6z" />
          <div className="flex w-[177px] items-center justify-center rounded-[2px] border-2 border-[#8a8a8a] bg-linear-to-b from-white to-[#e6e6e6]">
            <svg className="h-[18px] w-[30px]"><rect width="100%" height="100%" fill="url(#grip)" /></svg>
          </div>
          <div className="flex-1 border-y border-dotted border-[#aaa] bg-[#f3f3f3]" />
          <SbBtn c="w-[24px]" d="M8 0v12L1 6z" />
          <SbBtn c="w-[25px]" d="M0 0v12l7-6z" />
        </div>
      </div>
      <div className="flex h-[13px] items-center justify-center pr-[14px]">
        <svg className="h-[4px] w-[168px]"><rect width="100%" height="100%" fill="url(#row)" /></svg>
      </div>
      <div className="w-[505px]">
        <div className="flex h-[29px] items-center">
          <HDots c="w-[166px]" />
          <span className="ml-[11px] w-[105px] pt-[1px] text-[19px] tracking-[-0.4px]">Layers Panel</span>
          <HDots c="ml-[8px] w-[165px]" />
          <div className="ml-auto"><PanelBtns /></div>
        </div>
        <div className="flex h-[50px] items-center">
          <P w="w-[42px]"><Ic c="size-[24px]"><path d="m2 12 8-4 6 6-6 8z" fill="#ee6b3c" /><path d="m4 8 6-4 3 4-5 3z" fill="#fbe04c" /><path d="m2 16 6 5" stroke="#e8464a" strokeWidth="3" /><path d="m12 12 9.500-9.500" stroke="#c48324" strokeWidth="2.400" /><path d="m9 10 7 4 0 6-6-3z" fill="#d98d31" /></Ic></P>
          <P w="w-[42px]"><Ic c="size-[26px]"><path d="M8 5h12v14H8zM5 8v14h12M2 12v11h10" stroke="#8a9494" strokeWidth="1.300" /><path d="M11 17V2.500c0-2 4-2 4 0V17" stroke="#3f5f7e" strokeWidth="1.300" /><Plus /></Ic></P>
          <P w="w-[42px]"><Ic c="size-[27px]"><path d="M1 11C6 4 17 4 22 11c-5 6-16 6-21 0z" fill="#eee" stroke="#999" strokeWidth="1.300" /><circle cx="11.500" cy="10.600" r="4.600" fill="#5b84b0" stroke="#333" /><circle cx="11.500" cy="10.600" r="1.800" fill="#111" /><path d="M3 5c5-4 13-4 17 0" stroke="#aaa" /><path d="M14 17.500h10l-5 6z" fill="#000" /></Ic></P>
          <P w="w-[41px]"><Ic c="size-[26px]"><path d="M2 4.500h20l-8 8.500v10h-4V13z" fill="#5f8fc4" stroke="#3e668e" strokeWidth=".9" /><rect x="1.500" y="1" width="21" height="4" fill="#e7dc45" stroke="#a89c2a" strokeWidth=".7" /></Ic></P>
          <P w="w-[43px]"><Ic c="size-[26px]"><path d="M11 3C9 0 3 .8 3.500 4c.3 2 2 2.500 4 2.500-3 0-5.500 1-5.500 4C2 14.500 9 14.500 11 11" stroke="#aaa" strokeWidth="1.900" /><path d="M11 12h13l-1 3v8h-9v-8z" fill="#ccc" stroke="#aaa" /></Ic></P>
          <P w="w-[16px]"><svg viewBox="0 0 14 8" className="h-[8px] w-[14px]"><path d="M0 0h14L7 8z" fill="#9b9b9b" /></svg></P>
          <P w="w-[52px]"><Ic c="size-[26px]"><path d="M0 3h13M3 3v17h4M3 10h4" stroke="#999" strokeWidth="1.400" /><rect x="6" y="6" width="6" height="5.500" fill="#f08c1e" /><rect x="6" y="16" width="6" height="5.500" fill="#f08c1e" /><path d="M15 2h4.500v12H23l-5.800 9-5.800-9H15z" fill="#4f7fb5" stroke="#34577e" strokeWidth=".7" /></Ic></P>
          <P w="w-[36px]"><Ic c="size-[26px]"><path d="M0 3h11M3 3v17h4M3 10h4" stroke="#999" strokeWidth="1.400" /><rect x="6" y="6" width="5" height="5.500" fill="#f08c1e" /><rect x="6" y="16" width="5" height="5.500" fill="#f08c1e" /><path d="M15 22h4.500V10H23L17.200 1l-5.800 9H15z" fill="#4f7fb5" stroke="#34577e" strokeWidth=".7" /></Ic></P>
          <P w="w-[42px]"><Ic c="size-[26px]"><path d="M2 2h16.500v17H2z" fill="#f2f2f2" stroke="#8a8a8a" strokeWidth="1.500" /><rect x="13.500" y="15" width="9.500" height="8" rx="1" fill="#e8434a" /><path d="M15.300 19h6" stroke="#fff" strokeWidth="1.800" /></Ic></P>
        </div>
      </div>
      <div className="w-[507px] flex-1 border-t-[3px] border-r-2 border-b-[3px] border-[#b9b9b9] bg-white" />
    </div>
  );
}

/* ---------- status bar ---------- */

const Field = ({ children, c }: Kids & { c: string }) => (
  <div className={`flex h-[34px] items-center rounded-[3px] border-2 border-[#b2b2b2] bg-white ${c}`}>{children}</div>
);
const Spin = () => (
  <div className="ml-auto flex h-full w-[23px] flex-col items-center justify-around border-l border-[#b2b2b2] bg-[#f0f0f0]">
    <svg viewBox="0 0 12 7" className="h-[7px] w-[12px]"><path d="M0 7h12L6 0z" /></svg>
    <div className="h-px w-full bg-[#c4c4c4]" />
    <svg viewBox="0 0 12 7" className="h-[7px] w-[12px]"><path d="M0 0h12L6 7z" /></svg>
  </div>
);
const Val = ({ children }: Kids) => <span className="pt-[2px]">{children}</span>;

function StatusBar() {
  return (
    <div className="flex h-[52px] items-center bg-[#efefef] pl-[1340px] text-[19px] leading-none whitespace-nowrap">
      <span className="w-[100px] pt-[2px]">Coordinate</span>
      <Field c="w-[393px] justify-center tracking-[0.2px]"><Val>-1.733,0.320</Val></Field>
      <Ic c="ml-[7px] size-[30px]"><ellipse cx="9" cy="8" rx="4.500" ry="8.500" transform="rotate(-18 9 8)" fill="#fff" stroke="#111" strokeWidth="2" /><path d="m7 2 4 13M11 2l1 12M3 7l9 8" stroke="#111" strokeWidth="1.800" /><circle cx="15" cy="17.500" r="5.500" fill="#fff" stroke="#111" strokeWidth="1.700" /><circle cx="15" cy="17.500" r="1.800" fill="#111" /><path d="m19 6 3-4M20 11l2.500-1M1 14l2-1" stroke="#111" strokeWidth="1.400" /></Ic>
      <span className="ml-[23px] w-[51px] pt-[2px]">Scale</span>
      <Field c="w-[150px] pl-[8px]">
        <Val>1:1,216,415</Val>
        <div className="ml-auto flex h-full w-[23px] items-center justify-center border-l border-[#b2b2b2] bg-[#f0f0f0]"><svg viewBox="0 0 10 7" className="h-[7px] w-[10px]"><path d="M0 0h10L5 7z" /></svg></div>
      </Field>
      <svg viewBox="0 0 24 30" className="ml-[12px] h-[31px] w-[25px]" fill="none"><path d="M6 16V8c0-8 12-8 12 0v8" stroke="#a5a5a5" strokeWidth="3.400" /><path d="M6 16V8c0-8 12-8 12 0v8" stroke="#e5e5e5" strokeWidth="1.200" /><rect x="1" y="14.500" width="22" height="15" rx="1.500" fill="#666" /></svg>
      <span className="ml-[24px] w-[87px] pt-[2px]">Magnifier</span>
      <Field c="w-[123px] pl-[5px]"><Val>100%</Val><Spin /></Field>
      <span className="ml-[14px] w-[87px] pt-[2px]">Rotation</span>
      <Field c="w-[123px] pl-[6px]"><Val>0.0</Val><Spin /></Field>
      <div className="ml-[12px] flex size-[24px] items-center justify-center border border-[#aaa] bg-white"><svg viewBox="0 0 12 12" className="size-[19px]"><path d="m1.500 1 9 10M10.500 1l-9 10" stroke="#000" strokeWidth="3" /></svg></div>
      <span className="ml-[9px] w-[91px] pt-[2px]">Render</span>
      <Ic c="size-[30px]"><circle cx="12" cy="12" r="11" fill="#b5b5b5" stroke="#999" strokeWidth="1.400" /><ellipse cx="12" cy="12" rx="5.500" ry="7" fill="#e4e4e4" stroke="#808080" strokeWidth="1.400" /><path d="M1 12h22M12 1v22M4 5l4 3M20 5l-4 3M4 19l4-3M20 19l-4-3" stroke="#8a8a8a" strokeWidth="1.300" /></Ic>
      <span className="ml-[8px] w-[132px] pt-[2px]">EPSG:4326</span>
      <svg viewBox="0 0 32 30" className="h-[30px] w-[32px]"><ellipse cx="16" cy="12.500" rx="15.500" ry="12" fill="#666" /><path d="m17 23 12 7-3-10z" fill="#666" /><g fill="#fff"><circle cx="9" cy="12" r="2" /><circle cx="16" cy="12" r="2" /><circle cx="23" cy="12" r="2" /></g></svg>
    </div>
  );
}

/* ---------- task bar ---------- */

const Task = ({ children, on = false, active = false }: Kids & { on?: boolean; active?: boolean }) => (
  <div className={`flex h-full w-[95.4px] shrink-0 flex-col items-center ${active ? 'bg-[#4a443e]' : ''}`}>
    <div className="flex h-[71px] items-center pt-[5px]">{children}</div>
    <div className={`h-[6px] ${on ? 'bg-[#76b9ed]' : ''} ${active ? 'w-full' : 'w-[79px]'}`} />
  </div>
);
const Adobe = ({ t, b, s }: { t: string; b: string; s: string }) => (
  <Ic c="size-[43px]"><rect x="1" y="1" width="22" height="22" fill={b} stroke={s} strokeWidth="1.700" /><text x="12" y="16.400" textAnchor="middle" fontSize="11.500" fontWeight="700" fill={s} fontFamily="Open Sans, sans-serif">{t}</text></Ic>
);

function TaskBar() {
  return (
    <div className="flex h-[77px] bg-[#1e160f] text-white">
      <div className="flex w-[94px] items-center justify-center"><svg viewBox="0 0 32 32" className="size-[32px]" fill="#fff"><path d="M0 4.500 13 2.700v12.600H0zM14.500 2.500 32 0v15.300H14.500zM0 16.700h13v12.600L0 27.500zM14.500 16.700H32V32l-17.500-2.500z" /></svg></div>
      <div className="flex w-[95px] items-center justify-center pr-[6px]"><svg viewBox="0 0 32 30" className="h-[30px] w-[32px]" fill="none" stroke="#fff" strokeWidth="2"><path d="M1.500 0v5.500h19V0M1.500 10h19v10.500h-19zM1.500 30v-5.500h19V30M28.500 0v8M28.500 15v15" /><path d="M26 9h5v5h-5z" fill="#fff" stroke="none" /></svg></div>
      <Task><Ic c="size-[46px]"><rect width="24" height="24" rx=".8" fill="#0b73d6" /><circle cx="12" cy="12" r="9.800" fill="#fff" /><path d="m3.500 12 4.500-3.600v2.400h8V8.400l4.500 3.600-4.500 3.600v-2.400H8v2.400z" fill="#1173d4" /></Ic></Task>
      <Task><div className="relative"><Ic c="size-[42px]"><circle cx="12" cy="11.500" r="11.500" fill="#fff" /><path d="m.8 23.500 2-8 5.500 6z" fill="#fff" /><circle cx="12" cy="11.500" r="9.700" fill="#2bc04f" /><path d="m3.200 21 1.400-5.500 4 4z" fill="#2bc04f" /></Ic><FaPhoneAlt className="absolute top-[11px] left-[12px] size-[18px] -scale-x-100 text-white" /></div></Task>
      <Task on><Ic c="size-[44px]"><path d="M1 3h8l2 2h12v15H1z" fill="#ffe08a" /><path d="M1 2h8.500l1.500 3H1z" fill="#f5b81f" /><rect x="3" y="3" width="4" height="2" fill="#fff" /><path d="M5 12h14v9.500h-4v-5H9v5H5z" fill="#3fb2e8" /></Ic></Task>
      <Task><Ic c="size-[44px]"><rect x=".5" y="2.500" width="23" height="18" fill="#8e9399" /><rect x="1.500" y="5" width="21" height="14.500" fill="#2d3033" /><text x="3" y="11" fontSize="5.500" fill="#ccc" fontFamily="Liberation Mono, monospace">C:\_</text></Ic></Task>
      <Task><Ic c="size-[46px]"><rect width="24" height="24" fill="#222" /><path d="M0 0h10c3 3 6 7 8 10l3 7-2 6-5-4-5-1c-4-3-7-8-9-13z" fill="#e2e2e2" /><path d="M2 0c1 6 4 12 8 15M10 0c-2 4 0 8 2 10M9 18c1-4 4-6 8-7" stroke="#444" strokeWidth="1.100" /><path d="M14 0h10v16C22 10 18 4 14 0z" fill="#3a3a3a" /><circle cx="12" cy="13" r="1.200" fill="#d5494c" /></Ic></Task>
      <Task><Ic c="size-[46px]"><rect x=".5" width="23" height="23.500" fill="#8f8f91" /><path d="M8 0v6M0 7h4" stroke="#222" strokeWidth="2" /><circle cx="8" cy="5" r="2" fill="#222" /><circle cx="3" cy="7.500" r="2" fill="#222" /><path d="M1 24c0-14 22-14 22 0z" fill="#8aaf36" stroke="#fff" strokeWidth="1" /><path d="m6 12 3 4M18 12l-3 4" stroke="#e8efd5" strokeWidth="1.600" /><circle cx="8" cy="19.500" r="1.300" fill="#fff" /><circle cx="16" cy="19.500" r="1.300" fill="#fff" /></Ic></Task>
      <Task><Ic c="ml-[5px] size-[42px]"><QLogo /></Ic></Task>
      <Task><Adobe t="Id" b="#2f0615" s="#e0368c" /></Task>
      <Task><Adobe t="Ps" b="#0c0540" s="#84b8f4" /></Task>
      <Task on><Adobe t="Ai" b="#2b1500" s="#f39c27" /></Task>
      <Task><Ic c="size-[42px]"><g fill="#2b2b2b" stroke="#c2c2c2" strokeWidth=".9"><rect x="1" y="5.500" width="11" height="13" rx="5" /><rect x="12" y="5.500" width="11" height="13" rx="5" /><rect x="6" y=".8" width="12" height="10" rx="3.500" /><rect x="6" y="13.500" width="12" height="10" rx="3.500" /></g><path d="M7 2.500h10v2.500H7zM7 19h10v2.500H7z" fill="#e2242b" /><path d="M7 5.500h10l-5 4zM7 14h10l-3 3H9z" fill="#4b4b4b" /><path d="m6 10 6 2 2 3h4M6 14l3-2" stroke="#aaa" strokeWidth="1.100" /></Ic></Task>
      <Task><div className="relative flex size-[44px] items-center justify-center"><div className="absolute top-[14px] left-[17px] size-[20px] rounded-full bg-white" /><SiBlender className="relative size-[44px] text-[#f5821f]" /><div className="absolute top-[18px] left-[23px] size-[11px] rounded-full bg-[#12509a]" /></div></Task>
      <Task><Ic c="size-[46px]"><circle cx="12" cy="12" r="11.800" fill="url(#atom)" /><g stroke="#e9fbf0" strokeWidth=".9"><ellipse cx="12" cy="12" rx="7.500" ry="3" transform="rotate(10 12 12)" /><ellipse cx="12" cy="12" rx="7.500" ry="3" transform="rotate(70 12 12)" /><ellipse cx="12" cy="12" rx="7.500" ry="3" transform="rotate(130 12 12)" /></g><circle cx="12" cy="12" r="1" fill="#fff" /></Ic></Task>
      <Task><Ic c="size-[44px]"><Bug /></Ic></Task>
      <Task on><Ic c="size-[42px]"><circle cx="12" cy="12" r="12" fill="#fcd04b" /><path d="M12 12 1.600 6A12 12 0 0 1 22.400 6H12z" fill="#dd4b3e" /><path d="m1.600 6 5.200 9L12 24A12 12 0 0 1 1.600 6z" fill="#1aa05f" /><path d="M12 24 17.200 15 12 12l-5.200 3z" fill="#1aa05f" /><path d="M22.400 6H12v6l5.200 3L12 24A12 12 0 0 0 22.400 6z" fill="#fcd04b" /><circle cx="12" cy="12" r="5.500" fill="#fff" /><circle cx="12" cy="12" r="4.300" fill="#4c8bf5" /></Ic></Task>
      <Task><FaSpotify className="size-[42px] text-[#1ed760]" /></Task>
      <Task on><svg viewBox="0 0 35 35" className="size-[35px]"><path d="M0 0h35v17H18v18H0z" fill="#fff" /><path d="M35 20v15H21z" fill="#fff" /><path d="M18 17h15L18 34z" fill="#1e160f" /></svg></Task>
      <Task on active><Ic c="ml-[5px] size-[42px]"><QLogo /></Ic></Task>

      <div className="ml-auto flex items-center font-['Open_Sans',sans-serif] leading-none">
        <svg viewBox="0 0 28 30" className="h-[30px] w-[28px]" fill="none" stroke="#fff" strokeWidth="2"><circle cx="20" cy="6" r="4.500" /><circle cx="8" cy="15.500" r="4.500" /><path d="M1 29c1-11 13-11 14 0M14.500 13c5-4 11-1 12.500 6" /></svg>
        <svg viewBox="0 0 25 14" className="ml-[42px] h-[14px] w-[25px]" fill="none"><path d="M1 13 12.500 1.500 24 13" stroke="#fff" strokeWidth="2" /></svg>
        <svg viewBox="0 0 28 16" className="ml-[20px] h-[17px] w-[28px]"><path d="M1 1h24v14H1z" fill="none" stroke="#fff" strokeWidth="2" /><path d="M3.500 3.500h7v9h-7zM26 5h2v6h-2z" fill="#fff" /></svg>
        <svg viewBox="0 0 30 26" className="ml-[17px] h-[26px] w-[31px]"><path d="M4 19a5 5 0 0 1 1-9c1-9 13-12 16-4 5 0 8 4 7 8v5z" fill="#e9eef4" /><circle cx="21.500" cy="17" r="8" fill="#f4f8fd" /><path d="M16.500 16c1-5 7-6 9-2M26.500 18c-1 5-7 6-9 2" fill="none" stroke="#1e62c4" strokeWidth="2.200" /></svg>
        <svg viewBox="0 0 24 24" className="ml-[20px] size-[24px]" fill="none" stroke="#e5e5e5" strokeWidth="1.900"><path d="M1 23C1 10 10 1 23 1M6.500 23C6.500 13 13 6.500 23 6.500M12 23c0-7 4-11 11-11M17.500 23c0-4 2-5.500 5.500-5.500" /></svg>
        <svg viewBox="0 0 32 26" className="ml-[18px] h-[26px] w-[32px]" fill="none" stroke="#fff" strokeWidth="1.900"><path d="M1 8.500h4.500L11 3v20l-5.500-5.500H1z" /><path d="M15 9c2 2.500 2 5.500 0 8M19.500 6c4 4 4 10 0 14" /><path d="M24.500 3c6 6 6 14 0 20" stroke="#777" /></svg>
        <span className="ml-[19px] w-[65px] text-[22px]">CAT</span>
        <div className="flex w-[118px] flex-col items-center gap-[13px]">
          <span className="text-[22px] tracking-[-0.4px]">12:09</span>
          <span className="text-[22px]">02/07/2018</span>
        </div>
        <div className="relative ml-[36px] h-[46px] w-[48px] self-end">
          <svg viewBox="0 0 32 34" className="absolute -top-[9px] left-0 h-[34px] w-[32px]"><path d="M0 0h32v25H20l-5 6v-6H0z" fill="#fff" /><path d="M6 7h20M6 12.500h20M6 18h14" stroke="#1e160f" strokeWidth="2" /></svg>
          <div className="absolute top-[5px] left-[15px] flex size-[31px] items-center justify-center rounded-full border-2 border-[#8c8c8c] bg-[#2b2b2b] text-[20px] font-semibold">2</div>
        </div>
        <div className="ml-[22px] h-full w-px bg-[#6b6661]" />
        <div className="w-[8px]" />
      </div>
    </div>
  );
}

/* ---------- dialog ---------- */

const Radio = ({ on = false, t, w }: { on?: boolean; t: string; w: string }) => (
  <div className={`flex items-center gap-[12px] ${w}`}>
    <div className="flex size-[24px] items-center justify-center rounded-full border-2 border-[#bdbdbd] bg-[#fbfbfb]">{on && <div className="size-[16px] rounded-full bg-black" />}</div>
    <span className="pt-[1px]">{t}</span>
  </div>
);
const Btn = ({ t, c = 'border-[#b5b5b5]' }: { t: string; c?: string }) => (
  <div className={`flex h-[43px] w-[143px] items-center justify-center rounded-[3px] border-2 bg-linear-to-b from-[#fcfcfc] to-[#dcdcdc] pt-[2px] ${c}`}>{t}</div>
);
const Group = ({ t, children, c }: Kids & { t: string; c: string }) => (
  <div className={`relative rounded-[4px] border-2 border-[#bbb] ${c}`}>
    <span className="absolute -top-[12px] left-[10px] bg-[#efefef] px-[3px] text-[19px] leading-[22px] font-bold tracking-[0.5px] text-[#3a3a3a]">{t}</span>
    {children}
  </div>
);

function Dialog() {
  return (
    <div className="absolute top-[991px] left-[1379px] flex h-[406px] w-[749px] flex-col border-2 border-[#1b80d3] bg-[#efefef] text-[19px] leading-none shadow-[0_6px_26px_2px_rgba(0,0,0,0.38)]">
      <div className="flex h-[57px] items-center bg-white pl-[17px] font-['Open_Sans',sans-serif]">
        <Ic c="size-[29px]"><QLogo /></Ic>
        <span className="ml-[6px] w-[555px] text-[22px]">Add vector layer</span>
        <span className="w-[83px] text-[22px]">?</span>
        <svg viewBox="0 0 19 19" className="size-[19px]"><path d="m1 1 17 17M18 1 1 18" stroke="#111" strokeWidth="1.600" /></svg>
      </div>
      <Group t="Source type" c="mt-[30px] ml-[16px] h-[128px] w-[712px]">
        <div className="mt-[34px] flex pl-[18px]">
          <Radio on t="File" w="w-[88px]" />
          <Radio t="Directory" w="w-[198px]" />
          <Radio t="Database" w="w-[197px]" />
          <Radio t="Protocol" w="w-[120px]" />
        </div>
        <div className="mt-[14px] flex items-center pl-[18px]">
          <span className="w-[87px] pt-[1px] tracking-[-0.1px]">Encoding</span>
          <div className="flex h-[35px] w-[585px] items-center rounded-[3px] border-2 border-[#b5b5b5] bg-linear-to-b from-[#fbfbfb] to-[#dadada] pl-[6px]">
            <Val>System</Val>
            <div className="ml-auto flex h-full w-[24px] items-center justify-center border-l border-[#b5b5b5]"><svg viewBox="0 0 10 7" className="h-[7px] w-[10px]"><path d="M0 0h10L5 7z" /></svg></div>
          </div>
        </div>
      </Group>
      <Group t="Source" c="mt-[22px] ml-[16px] h-[96px] w-[712px]">
        <div className="mt-[31px] flex items-center pl-[18px]">
          <span className="w-[76px] pt-[2px] tracking-[-0.2px]">Dataset</span>
          <div className="h-[35px] w-[443px] rounded-[3px] border-2 border-[#b5b5b5] bg-white" />
          <div className="ml-[10px] flex h-[43px] w-[143px] items-center justify-center rounded-[2px] border-x-2 border-y-[3px] border-x-[#b5bcc6] border-y-[#6fb0f5] bg-linear-to-b from-[#eaf0f8] to-[#d2dae5] pt-[1px]">Browse</div>
        </div>
      </Group>
      <div className="mt-[8px] flex justify-end gap-[15px] pr-[17px]">
        <Btn t="Open" c="border-[#6f6f6f]" />
        <Btn t="Cancel" />
        <Btn t="Help" />
      </div>
    </div>
  );
}

export default function App() {
  return (
    <div className="relative h-[2480px] w-[3508px] overflow-hidden border-2 border-[#2e3e58] bg-white font-['DejaVu_Sans_Condensed','DejaVu_Sans',sans-serif] text-black">
      <svg className="absolute size-0">
        <defs>
          <pattern id="zig" width="9.200" height="9.200" patternUnits="userSpaceOnUse">
            <rect width="2.600" height="2.600" fill="#bdbdbd" /><rect x="1.600" y="2" width="2.400" height="2.400" fill="#fff" />
            <rect x="4.600" y="4.600" width="2.600" height="2.600" fill="#bdbdbd" /><rect x="6.200" y="6.600" width="2.400" height="2.400" fill="#fff" />
          </pattern>
          <pattern id="row" width="7" height="9.200" patternUnits="userSpaceOnUse"><rect width="2.800" height="2.800" fill="#bdbdbd" /><rect x="1.600" y="1.600" width="2.400" height="2.400" fill="#fff" /></pattern>
          <pattern id="col" width="9.200" height="9.200" patternUnits="userSpaceOnUse"><rect width="2.800" height="2.800" fill="#bdbdbd" /><rect x="1.600" y="1.600" width="2.400" height="2.400" fill="#fff" /></pattern>
          <pattern id="grip" width="6" height="6.500" patternUnits="userSpaceOnUse"><rect width="2.600" height="2.600" fill="#aaa" /><rect x="1.600" y="1.600" width="2" height="2" fill="#fff" /></pattern>
          <linearGradient id="atom" x1="0" y1="0" x2="0" y2="1"><stop offset="0" stopColor="#9bd88c" /><stop offset="1" stopColor="#119a6b" /></linearGradient>
        </defs>
      </svg>

      <h1 className="mt-[102px] ml-[276px] h-[138px] w-[1338px] bg-[#00ffff] pl-[42px] font-['Noto_Sans',sans-serif] text-[100px] leading-[130px] font-bold tracking-[-1.2px] whitespace-nowrap text-[#2e3e58] italic">
        añadir capa shapefile (shp)
      </h1>

      <div className="mt-[168px] ml-[276px] flex h-[1661px] w-[2953px] flex-col bg-white">
        <div className="flex h-[46px] items-center text-[#999]">
          <Ic c="ml-[6px] size-[30px]"><QLogo /></Ic>
          <span className="ml-[5px] pb-[1px] font-['Open_Sans',sans-serif] text-[21px] leading-none tracking-[0.1px]">QGIS 2.18.13</span>
          <div className="mr-[40px] ml-auto flex items-center">
            <div className="h-[2px] w-[19px] bg-[#999]" />
            <svg viewBox="0 0 19 19" className="ml-[71px] size-[19px]" fill="none" stroke="#999" strokeWidth="1.800"><path d="M1 4h13.500v14H1zM4 4V1h14v14h-3" /></svg>
            <svg viewBox="0 0 19 19" className="ml-[71px] size-[19px]"><path d="m1 1 17 17M18 1 1 18" stroke="#999" strokeWidth="1.800" /></svg>
          </div>
        </div>
        <div className="flex h-[39px] items-center border-b-[2px] border-[#b9b9b9] bg-[#efefef] pt-[3px] pl-[16px] text-[19px] leading-none tracking-[0.15px]">
          {menus.map(([t, w]) => <span key={t} className={`shrink-0 ${w}`}>{t}</span>)}
        </div>
        <div className="bg-[#efefef]"><ToolbarOne /></div>
        <div className="bg-[#efefef]"><ToolbarTwo /></div>
        <div className="flex min-h-0 flex-1 bg-[#efefef]">
          <LeftBar />
          <Panels />
          <div className="relative flex-1 border-t-2 border-r-2 border-b-[3px] border-l-[3px] border-[#b9b9b9] bg-white">
            <svg className="absolute top-[441px] -left-[10px] h-[438px] w-[5px]"><rect width="100%" height="100%" fill="url(#col)" /></svg>
          </div>
        </div>
        <StatusBar />
        <TaskBar />
      </div>

      {/* callout: frame round the button and the arrow to the dialog */}
      <div className="absolute top-[595px] left-[238px] h-[94px] w-[135px] border-[12px] border-[#2e3e58]" />
      <svg className="absolute top-[635px] left-[372px] h-[342px] w-[1470px]" fill="none">
        <path d="M0 6h1438v315" stroke="#2e3e58" strokeWidth="12" />
        <path d="M1438 338 1417 317v-20l21 19 21-19v20z" fill="#2e3e58" />
      </svg>
      <Dialog />
    </div>
  );
}
